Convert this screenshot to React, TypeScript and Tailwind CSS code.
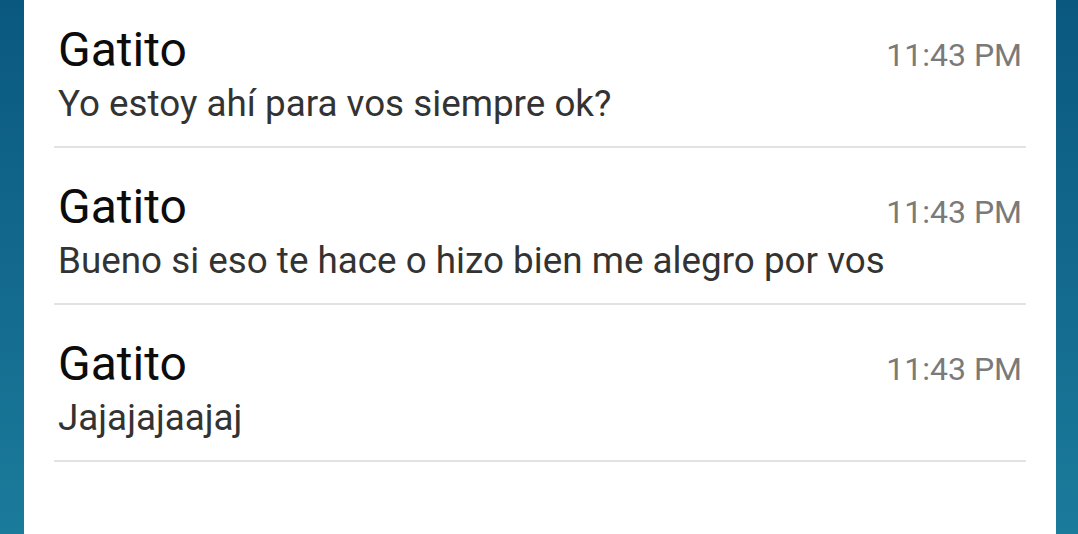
const messages = [
  { name: "Gatito", time: "11:43 PM", text: "Yo estoy ahí para vos siempre ok?" },
  { name: "Gatito", time: "11:43 PM", text: "Bueno si eso te hace o hizo bien me alegro por vos" },
  { name: "Gatito", time: "11:43 PM", text: "Jajajajaajaj" },
];

const App = () => {
  return (
    <div className="flex h-[534px] w-[1078px] overflow-hidden bg-gradient-to-b from-[#0a5880] to-[#1b7b9b] pl-[24px] pr-[22px] font-['Roboto',sans-serif]">
      <div className="flex-1 bg-white px-[30px] overflow-hidden">
        <div className="-mt-[9px]">
          {messages.map((m, i) => (
            <div key={i} className="h-[157px] border-b-2 border-[#e2e2e2] pt-[31px] px-[4px]">
              <div className="flex items-baseline justify-between">
                <span className="text-[48px] leading-[56px] text-[#0c0c0c]">{m.name}</span>
                <span className="text-[32px] text-[#7a7a7a]">{m.time}</span>
              </div>
              <p className="text-[36.8px] leading-[49px] text-[#333333]">{m.text}</p>
            </div>
          ))}
        </div>
      </div>
    </div>
  );
};

export default App;
